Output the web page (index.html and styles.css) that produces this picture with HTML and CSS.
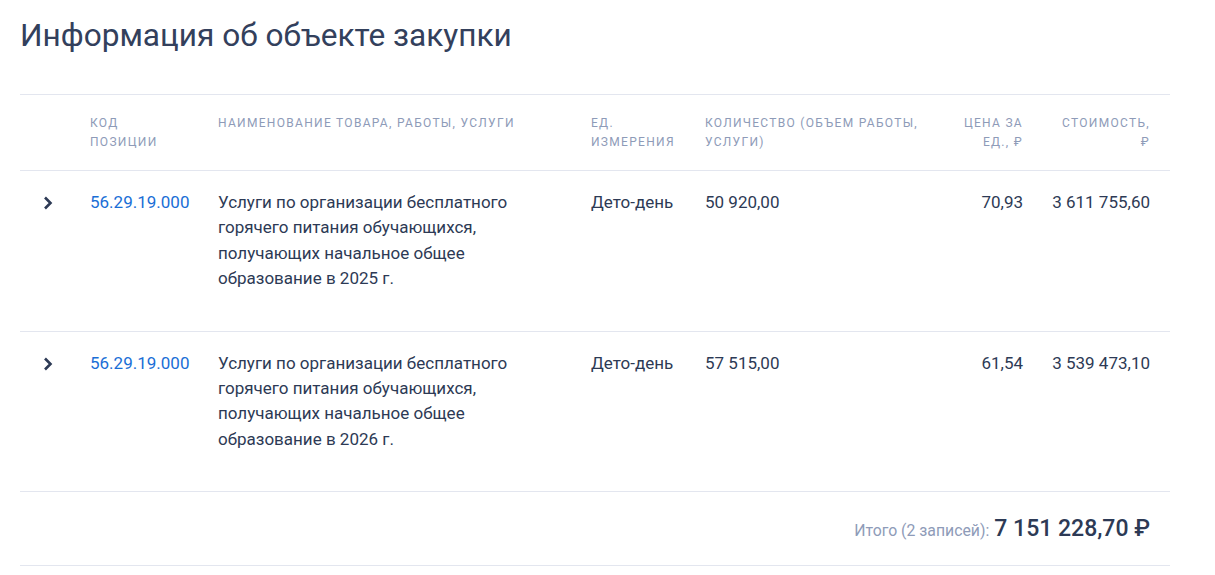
FILE: index.html
```html
<!DOCTYPE html>
<html lang="ru">
<head>
<meta charset="utf-8">
<title>Информация об объекте закупки</title>
<link rel="stylesheet" href="styles.css">
</head>
<body>
<section class="block">
  <h1 class="title">Информация об объекте закупки</h1>
  <div class="table">
    <div class="row head">
      <div class="cell"></div>
      <div class="cell">Код<br>позиции</div>
      <div class="cell">Наименование товара, работы, услуги</div>
      <div class="cell">Ед.<br>измерения</div>
      <div class="cell">Количество (объем работы,<br>услуги)</div>
      <div class="cell right pr">Цена за<br>ед., ₽</div>
      <div class="cell right">Стоимость,<br>₽</div>
    </div>
    <div class="row item">
      <div class="cell chev"><svg width="10" height="14" viewBox="0 0 10 14"><path d="M2 1.5 L7.5 7 L2 12.5" fill="none" stroke="#2d3a55" stroke-width="2.6"/></svg></div>
      <div class="cell"><a class="code" href="#">56.29.19.000</a></div>
      <div class="cell name">Услуги по организации бесплатного горячего питания обучающихся, получающих начальное общее образование в 2025 г.</div>
      <div class="cell">Дето-день</div>
      <div class="cell">50 920,00</div>
      <div class="cell right pr">70,93</div>
      <div class="cell right">3 611 755,60</div>
    </div>
    <div class="row item">
      <div class="cell chev"><svg width="10" height="14" viewBox="0 0 10 14"><path d="M2 1.5 L7.5 7 L2 12.5" fill="none" stroke="#2d3a55" stroke-width="2.6"/></svg></div>
      <div class="cell"><a class="code" href="#">56.29.19.000</a></div>
      <div class="cell name">Услуги по организации бесплатного горячего питания обучающихся, получающих начальное общее образование в 2026 г.</div>
      <div class="cell">Дето-день</div>
      <div class="cell">57 515,00</div>
      <div class="cell right pr">61,54</div>
      <div class="cell right">3 539 473,10</div>
    </div>
    <div class="total">
      <span class="total-label">Итого (2 записей):</span>
      <span class="total-value">7 151 228,70 ₽</span>
    </div>
  </div>
</section>
</body>
</html>
```
FILE: styles.css
```css
* { box-sizing: border-box; }
html, body { margin: 0; padding: 0; background: #fff; }
body {
  font-family: Roboto, "Noto Sans", "Liberation Sans", sans-serif;
  color: #2d3a55;
}
.block {
  padding: 15px 45px 0 20px;
}
.title {
  margin: 0;
  font-size: 31.6px;
  font-weight: 400;
  line-height: 42px;
  color: #33405c;
}
.table {
  margin-top: 37px;
  border-top: 1px solid #e3e6ef;
}
.row {
  display: grid;
  grid-template-columns: 70px 128px 373px 114px 238px 96px 111px;
  padding-right: 20px;
  border-bottom: 1px solid #e3e6ef;
}
.head {
  padding-top: 19px;
  padding-bottom: 18px;
  font-size: 12px;
  line-height: 19px;
  letter-spacing: 1.3px;
  text-transform: uppercase;
  color: #8e9bb8;
}
.item {
  padding-top: 19px;
  padding-bottom: 39px;
  font-size: 17px;
  line-height: 25.4px;
}
.right { text-align: right; }
.pr { padding-right: 16px; }
.name { padding-right: 40px; }
.chev {
  display: flex;
  justify-content: flex-start;
  align-items: flex-start;
  padding-left: 23px;
  padding-top: 6px;
}
.code {
  color: #1a6ed6;
  text-decoration: none;
}
.total {
  display: flex;
  justify-content: flex-end;
  align-items: baseline;
  gap: 5px;
  padding: 23px 20px 23px 0;
  border-bottom: 1px solid #e3e6ef;
}
.total-label {
  font-size: 15.8px;
  color: #8e9bb8;
}
.total-value {
  font-size: 23px;
  font-weight: 500;
  line-height: 27px;
  color: #2d3a55;
}
```
